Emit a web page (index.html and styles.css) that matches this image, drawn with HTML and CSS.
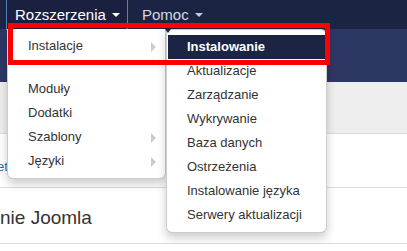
FILE: index.html
```html
<!DOCTYPE html>
<html lang="pl">
<head>
    <meta charset="UTF-8">
    <meta name="viewport" content="width=device-width, initial-scale=1.0">
    <title>Rozszerzenia: Instalowanie</title>
    <link rel="stylesheet" href="styles.css">
</head>
<body>
    <div class="navbar">
        <ul class="nav">
            <li class="nav-item open">
                <a href="#">Rozszerzenia <span class="caret"></span></a>
                <ul class="dropdown-menu">
                    <li class="dropdown-submenu">
                        <a href="#">Instalacje</a>
                        <ul class="dropdown-menu submenu">
                            <li class="active"><a href="#">Instalowanie</a></li>
                            <li><a href="#">Aktualizacje</a></li>
                            <li><a href="#">Zarządzanie</a></li>
                            <li><a href="#">Wykrywanie</a></li>
                            <li><a href="#">Baza danych</a></li>
                            <li><a href="#">Ostrzeżenia</a></li>
                            <li><a href="#">Instalowanie języka</a></li>
                            <li><a href="#">Serwery aktualizacji</a></li>
                        </ul>
                    </li>
                    <li class="divider"></li>
                    <li><a href="#">Moduły</a></li>
                    <li><a href="#">Dodatki</a></li>
                    <li class="dropdown-submenu"><a href="#">Szablony</a></li>
                    <li class="dropdown-submenu"><a href="#">Języki</a></li>
                </ul>
            </li>
            <li class="nav-item">
                <a href="#">Pomoc <span class="caret"></span></a>
            </li>
        </ul>
    </div>
    <div class="subhead"></div>
    <div class="toolbar"></div>
    <div class="content">
        <div class="links"><a href="#">et</a></div>
        <h2 class="page-title">nie Joomla</h2>
    </div>
    <div class="highlight"></div>
</body>
</html>
```

FILE: styles.css
```css
body {
    font-family: 'Liberation Sans', Arial, sans-serif;
    margin: 0;
    padding: 0;
    background-color: #fff;
    color: #333;
    overflow: hidden;
}
ul {
    list-style: none;
    margin: 0;
    padding: 0;
}
a {
    text-decoration: none;
}
.navbar {
    height: 29px;
    background-color: #1c2443;
    position: relative;
    z-index: 10;
}
.nav {
    display: flex;
    padding-left: 6px;
    height: 29px;
}
.nav-item {
    position: relative;
}
.nav-item > a {
    display: flex;
    align-items: center;
    height: 29px;
    padding: 0 8px 0 14px;
    font-size: 15px;
    color: #d5d9e4;
}
.nav-item > a .caret {
    margin-left: 6px;
    margin-top: 1px;
    border-top: 4px solid #c8ccd8;
    border-left: 4px solid transparent;
    border-right: 4px solid transparent;
}
.nav-item.open > a {
    box-sizing: border-box;
    height: 30px;
    width: 122px;
    padding: 0 0 0 8px;
    border: 1px solid #5d7fb8;
    border-top: none;
    color: #fff;
    background-color: #1a2140;
}
.nav-item.open > a .caret {
    border-top-color: #fff;
}
.dropdown-menu {
    position: absolute;
    top: 29px;
    left: 1px;
    width: 159px;
    box-sizing: border-box;
    padding: 5px 0;
    background-color: #fff;
    border: 1px solid rgba(0, 0, 0, 0.2);
    border-top: none;
    border-radius: 0 0 6px 6px;
    box-shadow: 0 5px 10px rgba(0, 0, 0, 0.2);
}
.dropdown-menu li > a {
    display: block;
    padding: 0 20px;
    line-height: 24px;
    font-size: 13px;
    color: #333;
    white-space: nowrap;
}
.dropdown-menu .divider {
    height: 1px;
    margin: 9px 1px;
    background-color: #f2f2f2;
}
.dropdown-submenu {
    position: relative;
}
.dropdown-submenu > a::after {
    content: "";
    position: absolute;
    right: 9px;
    top: 8px;
    border-left: 5px solid #cccccc;
    border-top: 5px solid transparent;
    border-bottom: 5px solid transparent;
}
.submenu {
    top: -5px;
    left: 158px;
    width: 161px;
    border-top: 1px solid rgba(0, 0, 0, 0.2);
    border-radius: 0 6px 6px 6px;
}
.submenu::before {
    content: "";
    position: absolute;
    left: -2px;
    top: -1px;
    border-top: 4px solid #1c2443;
    border-left: 3px solid transparent;
    border-right: 3px solid transparent;
}
.submenu li.active > a {
    margin: 0 1px;
    padding-left: 19px;
    background-color: #1c2443;
    color: #fff;
    font-weight: bold;
}
.subhead {
    height: 53px;
    background-color: #2c3764;
}
.toolbar {
    height: 51px;
    background-color: #eeeeee;
    border-bottom: 1px solid #dcdcdc;
}
.content {
    padding-top: 25px;
}
.links {
    height: 28px;
    border-bottom: 1px solid #dddddd;
    font-size: 13px;
    margin-left: -3px;
}
.links a {
    color: #2a69b8;
}
.page-title {
    margin: 0;
    padding: 19px 0 14px;
    font-size: 19px;
    font-weight: normal;
    color: #333;
    border-bottom: 1px solid #dddddd;
}
.highlight {
    position: absolute;
    left: 8px;
    top: 23px;
    width: 322px;
    height: 42px;
    box-sizing: border-box;
    border: 5px solid #ff0000;
    z-index: 20;
}
```
